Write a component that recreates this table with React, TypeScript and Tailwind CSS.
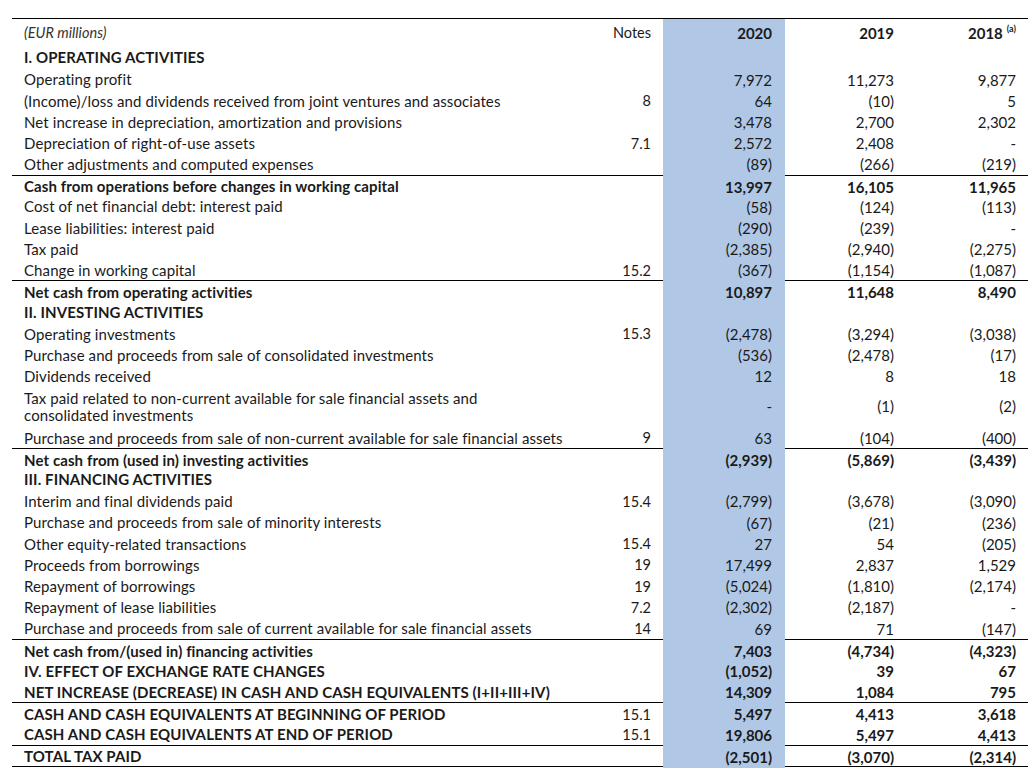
type Row = {
  label: string;
  note?: string;
  v: [string, string, string];
  bold?: boolean;
  line?: boolean;
  tall?: boolean;
};

const rows: Row[] = [
  { label: "I. OPERATING ACTIVITIES", v: ["", "", ""], bold: true },
  { label: "Operating profit", v: ["7,972", "11,273", "9,877"] },
  { label: "(Income)/loss and dividends received from joint ventures and associates", note: "8", v: ["64", "(10)", "5"] },
  { label: "Net increase in depreciation, amortization and provisions", v: ["3,478", "2,700", "2,302"] },
  { label: "Depreciation of right-of-use assets", note: "7.1", v: ["2,572", "2,408", "-"] },
  { label: "Other adjustments and computed expenses", v: ["(89)", "(266)", "(219)"] },
  { label: "Cash from operations before changes in working capital", v: ["13,997", "16,105", "11,965"], bold: true, line: true },
  { label: "Cost of net financial debt: interest paid", v: ["(58)", "(124)", "(113)"] },
  { label: "Lease liabilities: interest paid", v: ["(290)", "(239)", "-"] },
  { label: "Tax paid", v: ["(2,385)", "(2,940)", "(2,275)"] },
  { label: "Change in working capital", note: "15.2", v: ["(367)", "(1,154)", "(1,087)"] },
  { label: "Net cash from operating activities", v: ["10,897", "11,648", "8,490"], bold: true, line: true },
  { label: "II. INVESTING ACTIVITIES", v: ["", "", ""], bold: true },
  { label: "Operating investments", note: "15.3", v: ["(2,478)", "(3,294)", "(3,038)"] },
  { label: "Purchase and proceeds from sale of consolidated investments", v: ["(536)", "(2,478)", "(17)"] },
  { label: "Dividends received", v: ["12", "8", "18"] },
  { label: "Tax paid related to non-current available for sale financial assets and consolidated investments", v: ["-", "(1)", "(2)"], tall: true },
  { label: "Purchase and proceeds from sale of non-current available for sale financial assets", note: "9", v: ["63", "(104)", "(400)"] },
  { label: "Net cash from (used in) investing activities", v: ["(2,939)", "(5,869)", "(3,439)"], bold: true, line: true },
  { label: "III. FINANCING ACTIVITIES", v: ["", "", ""], bold: true },
  { label: "Interim and final dividends paid", note: "15.4", v: ["(2,799)", "(3,678)", "(3,090)"] },
  { label: "Purchase and proceeds from sale of minority interests", v: ["(67)", "(21)", "(236)"] },
  { label: "Other equity-related transactions", note: "15.4", v: ["27", "54", "(205)"] },
  { label: "Proceeds from borrowings", note: "19", v: ["17,499", "2,837", "1,529"] },
  { label: "Repayment of borrowings", note: "19", v: ["(5,024)", "(1,810)", "(2,174)"] },
  { label: "Repayment of lease liabilities", note: "7.2", v: ["(2,302)", "(2,187)", "-"] },
  { label: "Purchase and proceeds from sale of current available for sale financial assets", note: "14", v: ["69", "71", "(147)"] },
  { label: "Net cash from/(used in) financing activities", v: ["7,403", "(4,734)", "(4,323)"], bold: true, line: true },
  { label: "IV. EFFECT OF EXCHANGE RATE CHANGES", v: ["(1,052)", "39", "67"], bold: true },
  { label: "NET INCREASE (DECREASE) IN CASH AND CASH EQUIVALENTS (I+II+III+IV)", v: ["14,309", "1,084", "795"], bold: true },
  { label: "CASH AND CASH EQUIVALENTS AT BEGINNING OF PERIOD", note: "15.1", v: ["5,497", "4,413", "3,618"], bold: true, line: true },
  { label: "CASH AND CASH EQUIVALENTS AT END OF PERIOD", note: "15.1", v: ["19,806", "5,497", "4,413"], bold: true },
  { label: "TOTAL TAX PAID", v: ["(2,501)", "(3,070)", "(2,314)"], bold: true, line: true },
];

const cols = "grid grid-cols-[588px_63px_122px_122px_121px] items-center";

export default function App() {
  return (
    <div className="w-[1034px] h-[773px] overflow-hidden bg-white pt-[18px] pl-[12px] text-[#1a1a1a] font-['Lato',sans-serif] text-[15px]">
      <div className="w-[1016px] border-t border-b border-black">
        <div className={cols + " h-[28.4px]"}>
          <div className="pl-[12px] italic text-[14.5px] text-[#333]">(EUR millions)</div>
          <div className="text-right pr-[12px] text-[14.5px]">Notes</div>
          <div className="h-full bg-[#b0c8e6] flex items-center justify-end pr-[13px] font-bold">2020</div>
          <div className="text-right pr-[13px] font-bold">2019</div>
          <div className="text-right pr-[12px] font-bold">
            2018<sup className="text-[9px] ml-[4px] align-[2px]">(a)</sup>
          </div>
        </div>
        {rows.map((r, i) => (
          <div
            key={i}
            className={
              cols +
              (r.tall ? " h-[40.5px]" : " h-[21.2px]") +
              (r.line ? " border-t border-black" : "") +
              (r.bold ? " font-bold" : "")
            }
          >
            <div
              className={
                "pl-[12px] tracking-[0.1px] " +
                (r.tall ? "w-[480px] leading-[17px]" : "leading-none whitespace-nowrap")
              }
            >
              {r.label}
            </div>
            <div className="text-right pr-[12px] font-normal text-[14.5px]">{r.note}</div>
            <div className="h-full bg-[#b0c8e6] flex items-center justify-end pr-[13px]">{r.v[0]}</div>
            <div className="text-right pr-[13px]">{r.v[1]}</div>
            <div className="text-right pr-[12px]">{r.v[2]}</div>
          </div>
        ))}
      </div>
    </div>
  );
}
